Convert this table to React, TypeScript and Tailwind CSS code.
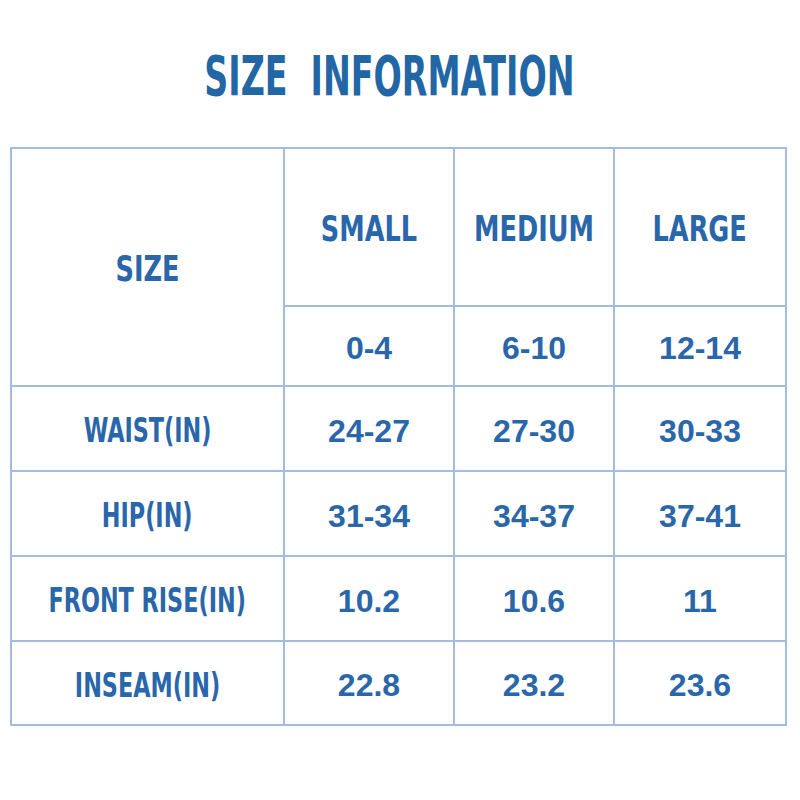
const sizes = [
  { name: "SMALL", range: "0-4" },
  { name: "MEDIUM", range: "6-10" },
  { name: "LARGE", range: "12-14" },
];

const rows = [
  { label: "WAIST(IN)", values: ["24-27", "27-30", "30-33"] },
  { label: "HIP(IN)", values: ["31-34", "34-37", "37-41"] },
  { label: "FRONT RISE(IN)", values: ["10.2", "10.6", "11"] },
  { label: "INSEAM(IN)", values: ["22.8", "23.2", "23.6"] },
];

const narrow = "font-['DejaVu_Sans_Condensed','DejaVu_Sans',sans-serif] font-bold";
const num = "font-['Liberation_Sans','Arial',sans-serif] font-bold";
const cell = "bg-white flex items-center justify-center pt-[4px]";

export default function App() {
  return (
    <div className="w-[800px] h-[800px] bg-white text-[#2a66aa]">
      <div className="pt-[44px] h-[147px] flex justify-center">
        <h1
          className={`${narrow} text-[56px] leading-[64px] text-[#2366a6] whitespace-pre inline-block scale-x-[0.66] ml-[-22px]`}
        >
          SIZE  INFORMATION
        </h1>
      </div>

      <div className="ml-[10px] w-[777px] grid grid-cols-[271px_168px_158px_170px] grid-rows-[156px_78px_83px_83px_83px_82px] gap-[2px] p-[2px] bg-[#a3bbdd]">
        <div className={`row-span-2 ${cell}`}>
          <span className={`${narrow} text-[36px] inline-block scale-x-[0.79]`}>SIZE</span>
        </div>
        {sizes.map((s) => (
          <div key={s.name} className={cell}>
            <span className={`${narrow} text-[36px] inline-block scale-x-[0.79]`}>{s.name}</span>
          </div>
        ))}
        {sizes.map((s) => (
          <div key={s.range} className={cell}>
            <span className={`${num} text-[32px]`}>{s.range}</span>
          </div>
        ))}
        {rows.map((r) => (
          <>
            <div key={r.label} className={cell}>
              <span className={`${narrow} text-[34px] inline-block scale-x-[0.73] whitespace-nowrap`}>{r.label}</span>
            </div>
            {r.values.map((v, i) => (
              <div key={r.label + i} className={cell}>
                <span className={`${num} text-[32px]`}>{v}</span>
              </div>
            ))}
          </>
        ))}
      </div>
    </div>
  );
}
